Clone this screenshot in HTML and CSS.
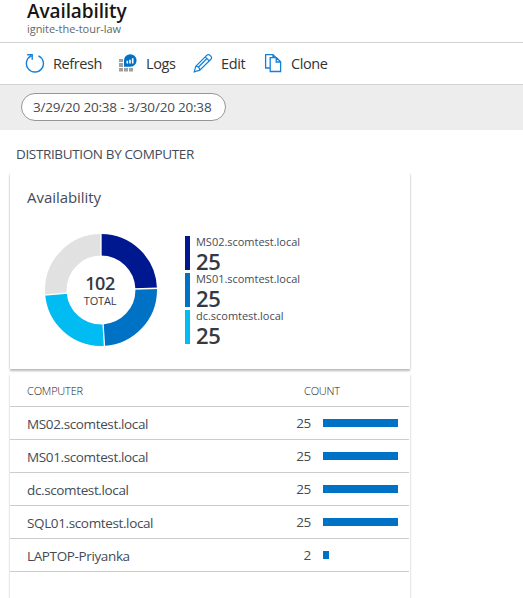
FILE: index.html
```html
<!DOCTYPE html>
<html lang="en">
<head>
<meta charset="utf-8">
<title>Availability</title>
<link rel="stylesheet" href="styles.css">
</head>
<body>
<header class="header">
  <h1>Availability</h1>
  <p>ignite-the-tour-law</p>
</header>
<nav class="toolbar">
  <a class="tool refresh">
    <svg width="20" height="20" viewBox="0 0 20 20" fill="none" stroke="#1480d8" stroke-width="1.4"><path d="M13.4 1.8A8.5 8.5 0 1 1 6.2 1.9M2.2 .8H7.2V5.8"/></svg>
    <span>Refresh</span>
  </a>
  <a class="tool logs">
    <svg width="20" height="20" viewBox="0 0 20 20"><g fill="#a0a0a0"><path d="M1 5h4v3H1zM1 9h4v4H1zM1 14h4v3.5H1zM6 14h4v3.5H6zM11 14h4v3.5h-4z"/></g><path fill="#0072c6" d="M6 12.8V6.5A6.3 6.3 0 1 1 12.5 12.8Z"/><path stroke="#fff" stroke-width="1.6" d="M9.3 9.5V6.7M12 9.5V5.7M14.7 9.5V4.3"/></svg>
    <span>Logs</span>
  </a>
  <a class="tool edit">
    <svg width="20" height="20" viewBox="0 0 20 20" fill="none" stroke="#1480d8" stroke-width="1.2"><path d="M1.2 17.8 2.8 12.2 13.7 1.4Q15 .1 16.7 1L18 2.3Q19.2 3.9 17.9 5.3L6.8 16.2ZM2.8 12.2Q6.5 12.5 6.8 16.2M12.2 2.9 16.4 7M5 13.5 13.5 5"/></svg>
    <span>Edit</span>
  </a>
  <a class="tool clone">
    <svg width="20" height="20" viewBox="0 0 20 20" fill="none" stroke="#1480d8" stroke-width="1.3"><path d="M6.5 14H1.6V.7H9L12 3.7M9 .7V3.7M6.2 3.7H12.5L16.6 7.8V17.5H6.2ZM12.2 3.7V8H16.6"/></svg>
    <span>Clone</span>
  </a>
</nav>
<div class="filters"><div class="pill"><span>3/29/20 20:38 - 3/30/20 20:38</span></div></div>
<main>
  <h2><span>DISTRIBUTION BY COMPUTER</span></h2>
  <section class="card summary">
    <h3><span>Availability</span></h3>
    <div class="chart">
      <div class="donut">
        <svg width="114" height="114" viewBox="-57 -57 114 114">
          <g class="ring" transform="rotate(-90)">
            <circle r="45.2" pathLength="102" stroke="#e1e1e1"/>
            <circle r="45.2" pathLength="102" stroke="#00188f" stroke-dasharray="25 77"/>
            <circle r="45.2" pathLength="102" stroke="#0072c6" stroke-dasharray="25 77" stroke-dashoffset="-25"/>
            <circle r="45.2" pathLength="102" stroke="#00bcf2" stroke-dasharray="25 77" stroke-dashoffset="-50"/>
          </g>
          <path stroke="#fff" stroke-width="1.3" d="M0-33V-58M33-1 58-1.8M2 33 3.6 58M-33 3-58 5.3"/>
        </svg>
        <div class="total"><strong>102</strong><span>TOTAL</span></div>
      </div>
      <ul class="legend">
        <li class="navy"><span>MS02.scomtest.local</span><b>25</b></li>
        <li class="blue"><span>MS01.scomtest.local</span><b>25</b></li>
        <li class="cyan"><span>dc.scomtest.local</span><b>25</b></li>
      </ul>
    </div>
  </section>
  <section class="card table">
    <div class="row head"><span>COMPUTER</span><span class="count">COUNT</span></div>
    <div class="row"><span class="name">MS02.scomtest.local</span><span class="num">25</span><i class="bar"></i></div>
    <div class="row"><span class="name">MS01.scomtest.local</span><span class="num">25</span><i class="bar"></i></div>
    <div class="row"><span class="name">dc.scomtest.local</span><span class="num">25</span><i class="bar"></i></div>
    <div class="row"><span class="name">SQL01.scomtest.local</span><span class="num">25</span><i class="bar"></i></div>
    <div class="row"><span class="name">LAPTOP-Priyanka</span><span class="num">2</span><i class="bar small"></i></div>
  </section>
</main>
</body>
</html>
```
FILE: styles.css
```css
* { box-sizing: border-box; margin: 0; padding: 0; }
html, body { height: 598px; overflow: hidden; }
body { background: #fff; color: #454b55; font-family: "Open Sans", "Noto Sans", sans-serif; font-size: 14px; }
.header { height: 43px; border-bottom: 1px solid #d2d2d2; padding-left: 27px; color: #161616; }
.header h1 { font-size: 19px; font-weight: 600; line-height: 23px; letter-spacing: -.1px; }
.header p { font-size: 11px; line-height: 12px; color: #666; letter-spacing: -.05px; }
.toolbar { height: 42px; border-bottom: 1px solid #d2d2d2; display: flex; align-items: center; padding-left: 25px; color: #333; }
.tool { display: flex; align-items: center; gap: 8px; font-size: 14.5px; height: 41px; white-space: nowrap; }
.tool svg { flex: none; }
.tool span { letter-spacing: -.4px; }
.refresh { width: 93px; }
.logs { width: 75px; }
.edit { width: 71px; }
.clone { gap: 7px; }
.filters { height: 45px; background: #ededed; padding: 8px 21px; }
.pill { width: 205px; height: 28px; border: 1px solid #969696; border-radius: 14px; background: #fff; padding-left: 11px; line-height: 27px; font-size: 13.5px; white-space: nowrap; letter-spacing: -.2px; }
main { height: 468px; padding: 13px 0 0 10px; display: flex; flex-direction: column; }
h2 { font-size: 13.5px; font-weight: 400; line-height: 22px; height: 30px; flex: none; padding-left: 6px; letter-spacing: -.36px; }
.card { width: 400px; background: #fff; flex: none; }
.summary { height: 196px; padding: 13px 0 0 17px; box-shadow: 0 2px 2px #b7bcbb, 0 0 2px #ddd; clip-path: inset(0 -3px -5px -3px); }
h3 { font-size: 15px; font-weight: 400; line-height: 22px; letter-spacing: -.05px; }
.chart { display: flex; padding: 25px 0 0 17px; height: 160px; }
.donut { display: grid; width: 114px; height: 114px; margin-top: -.5px; }
.donut svg { margin-left: -.5px; }
.donut > * { grid-area: 1 / 1; }
.ring circle { fill: none; stroke-width: 21.5; }
.total { display: flex; flex-direction: column; align-items: center; justify-content: center; color: #333a45; padding: 2px 2px 0 0; }
.total strong { font-size: 18px; font-weight: 600; line-height: 20px; letter-spacing: -.4px; }
.total span { font-size: 11px; line-height: 16px; letter-spacing: -.2px; }
.legend { list-style: none; display: flex; flex-direction: column; gap: 3px; margin: 3px 0 0 27px; }
.legend li { height: 34px; border-left: 5px solid; padding-left: 6px; display: flex; flex-direction: column; }
.legend span { font-size: 11px; line-height: 12px; color: #454b55; letter-spacing: -.02px; }
.legend b { font-size: 22px; line-height: 26px; font-weight: 600; color: #333a45; letter-spacing: -.3px; }
.legend .navy { border-color: #00188f; }
.legend .blue { border-color: #0072c6; }
.legend .cyan { border-color: #00bcf2; }
.table { margin-top: 5px; height: 240px; box-shadow: 0 1px 2px #bbb; clip-path: inset(0 -3px); }
.row { height: 33px; width: 399px; border-bottom: 1px solid #ccc; display: flex; align-items: center; padding-left: 17px; }
.head { font-size: 11px; font-weight: 300; letter-spacing: -.2px; color: #222; }
.head span:first-child { width: 277px; }
.name { width: 243px; padding-top: 2px; font-size: 13.5px; letter-spacing: -.37px; }
.num { width: 41px; text-align: right; font-size: 13.5px; letter-spacing: -.3px; }
.bar { width: 75px; height: 8px; margin-left: 12px; background: #0072c6; }
.bar.small { width: 6px; }
```
